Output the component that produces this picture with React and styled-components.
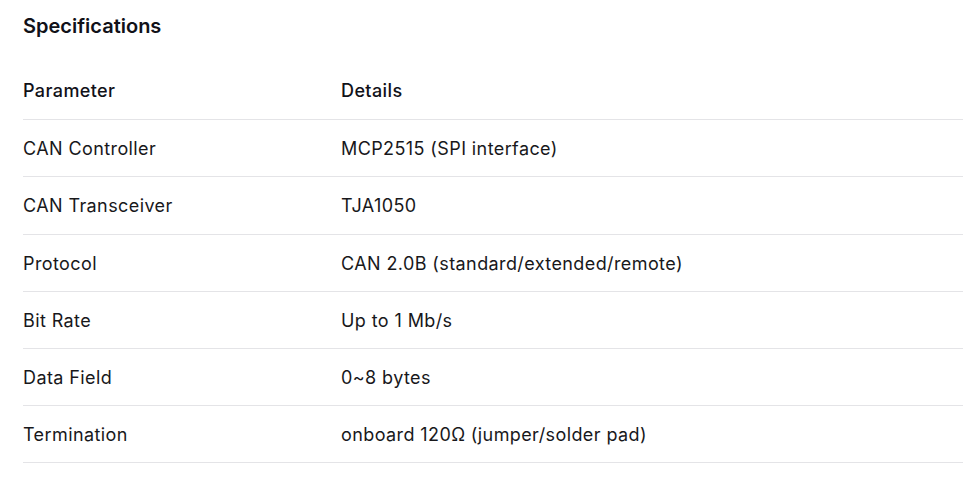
import React from 'react'
import styled, { createGlobalStyle } from 'styled-components'

const GlobalStyle = createGlobalStyle`
  body {
    margin: 0;
    background: #ffffff;
    font-family: Inter, "Noto Sans", sans-serif;
    color: #111118;
  }
`

const specs = [
  ['CAN Controller', 'MCP2515 (SPI interface)'],
  ['CAN Transceiver', 'TJA1050'],
  ['Protocol', 'CAN 2.0B (standard/extended/remote)'],
  ['Bit Rate', 'Up to 1 Mb/s'],
  ['Data Field', '0~8 bytes'],
  ['Termination', 'onboard 120Ω (jumper/solder pad)'],
]

function App() {
  return (
    <Page>
      <GlobalStyle />
      <Title>Specifications</Title>
      <Table>
        <thead>
          <Row>
            <HeadCell>Parameter</HeadCell>
            <HeadCell>Details</HeadCell>
          </Row>
        </thead>
        <tbody>
          {specs.map(([name, value]) => (
            <Row key={name}>
              <Cell>{name}</Cell>
              <Cell>{value}</Cell>
            </Row>
          ))}
        </tbody>
      </Table>
    </Page>
  )
}

export default App

const Page = styled.div`
  padding: 12px 0 0 23px;
`

const Title = styled.h3`
  margin: 0 0 23px;
  font-size: 20px;
  line-height: 28px;
  font-weight: 600;
  color: #111118;
`

const Table = styled.table`
  width: 100%;
  border-collapse: collapse;
  font-size: 18px;
  line-height: 24.17px;
  letter-spacing: 0.4px;
`

const Row = styled.tr`
  border-bottom: 1px solid #e4e4e7;
`

const Cell = styled.td`
  padding: 17px 0 15px;
  text-align: left;
  font-weight: 400;
  color: #18181b;
  &:first-child {
    width: 318px;
  }
`

const HeadCell = styled.th`
  padding: 16px 0 16px;
  text-align: left;
  font-weight: 500;
  color: #111118;
  &:first-child {
    width: 318px;
  }
`
